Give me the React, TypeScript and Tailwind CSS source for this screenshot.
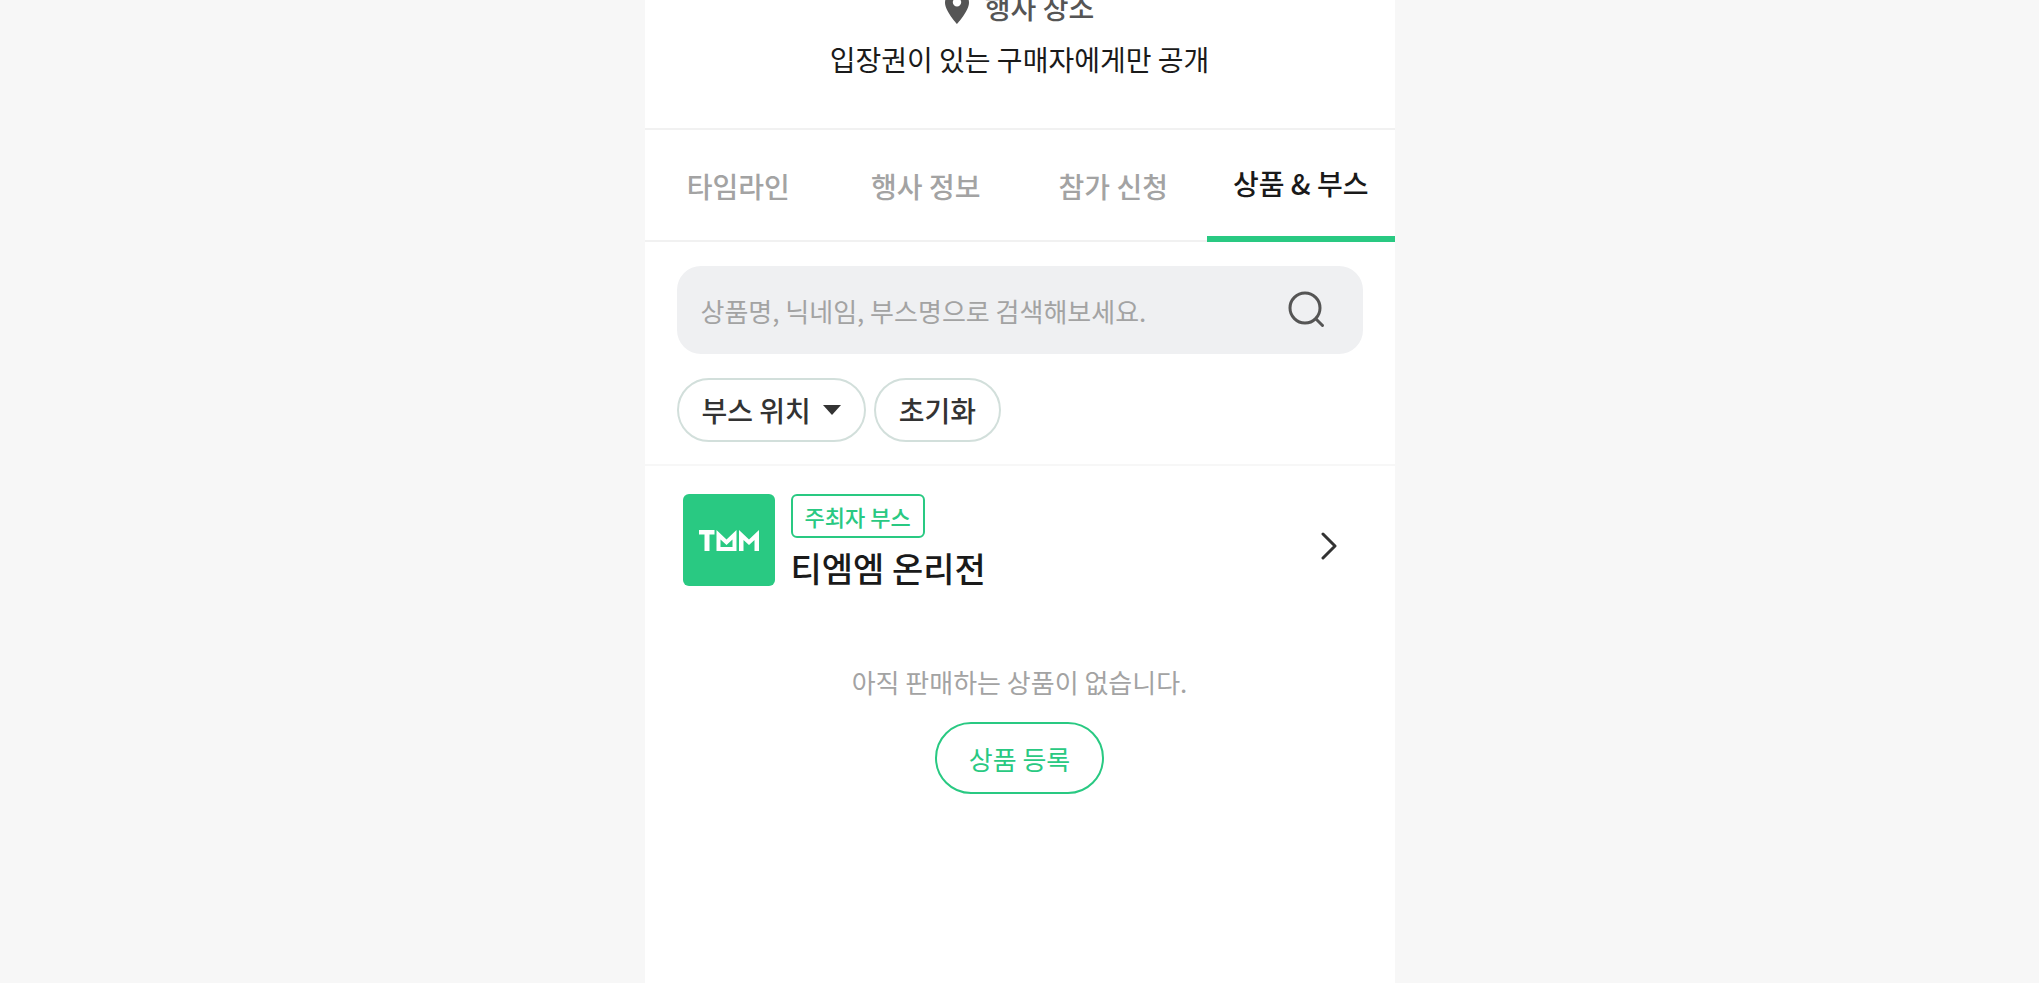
import React, { useState } from "react";

const tabs = ["타임라인", "행사 정보", "참가 신청", "상품 & 부스"];

const PinIcon: React.FC = () => (
  <svg width="24" height="34" viewBox="0 0 24 34" fill="#555555" aria-hidden="true">
    <path
      fillRule="evenodd"
      d="M12 1C5.200 1 0 6 0 12.800 0 21 12 34 12 34s12-13 12-21.200C24 6 18.800 1 12 1Zm0 15.500a4.200 4.200 0 1 1 0-8.400 4.200 4.200 0 0 1 0 8.400Z"
    />
  </svg>
);

const SearchIcon: React.FC = () => (
  <svg width="40" height="40" viewBox="0 0 40 40" fill="none" stroke="#555555" strokeWidth="3" strokeLinecap="round" aria-hidden="true">
    <circle cx="18" cy="18" r="15" />
    <path d="M29 29 35.500 35.500" />
  </svg>
);

const ChevronIcon: React.FC = () => (
  <svg width="16" height="28" viewBox="0 0 16 28" fill="none" stroke="#333333" strokeWidth="3" strokeLinecap="round" strokeLinejoin="round" aria-hidden="true">
    <path d="M2 2l12 12L2 26" />
  </svg>
);

const BoothLogo: React.FC = () => (
  <svg width="92" height="92" viewBox="0 0 92 92" role="img" aria-label="TMM" className="shrink-0">
    <rect width="92" height="92" rx="6" fill="#29c982" />
    <g fill="#ffffff">
      <path d="M16 36h15.500v4.500H26.500V57h-5V40.500H16z" />
      <path fillRule="evenodd" d="M33.500 36l10 9.500 10-9.500v21h-20zM37.500 45.500v7.500h12v-7.500L43.500 51z" />
      <path d="M56 57V36l10 9.500L76 36v21h-4.500V46L66 51l-5.500-5v11z" />
    </g>
  </svg>
);

export default function App() {
  const [active, setActive] = useState(3);

  return (
    <div className="h-screen overflow-hidden bg-[#f7f7f7] font-['Noto_Sans_CJK_KR',sans-serif] text-[#1a1a1a]">
      <main className="mx-auto flow-root min-h-screen w-full max-w-[750px] bg-white">
        {/* Event place, scrolled partly out of view */}
        <section className="-mt-[17px] flex flex-col items-center border-b-2 border-[#f1f1f1] pb-[45px]">
          <h2 className="flex items-center gap-4 text-[28px] leading-12 font-medium text-[#555555]">
            <PinIcon />
            행사 장소
          </h2>
          <p className="mt-1 text-[28px] leading-12">입장권이 있는 구매자에게만 공개</p>
        </section>

        {/* Tabs */}
        <nav className="grid h-28 grid-cols-4 shadow-[inset_0_-2px_0_#f1f1f1]">
          {tabs.map((tab, i) => (
            <button
              key={tab}
              type="button"
              onClick={() => setActive(i)}
              className={
                i === active
                  ? "border-b-6 border-[#29c982] text-[28px] font-medium"
                  : "text-[28px] font-medium text-[#a3a3a3]"
              }
            >
              {tab}
            </button>
          ))}
        </nav>

        {/* Search and filters */}
        <section className="border-b-2 border-[#f7f7f7] px-8 pt-6 pb-5.5">
          <form className="flex h-22 items-center rounded-3xl bg-[#eff0f2] pr-9 pl-6" onSubmit={(e) => e.preventDefault()}>
            <input
              type="text"
              aria-label="상품 검색"
              placeholder="상품명, 닉네임, 부스명으로 검색해보세요."
              className="min-w-0 flex-1 text-[26px] outline-none placeholder:text-[#a3a3a3]"
            />
            <button type="submit" aria-label="검색">
              <SearchIcon />
            </button>
          </form>
          <div className="mt-6 flex gap-2 text-[28px] font-medium text-[#333333]">
            <button type="button" className="flex h-16 items-center gap-3 rounded-full border-2 border-[#d2dfdb] px-[23px]">
              부스 위치
              <svg width="18" height="10" viewBox="0 0 18 10" fill="#333333" aria-hidden="true">
                <path d="M0 0h18L9 10z" />
              </svg>
            </button>
            <button type="button" className="h-16 rounded-full border-2 border-[#d2dfdb] px-[23px]">
              초기화
            </button>
          </div>
        </section>

        {/* Organizer booth */}
        <a href="#booth" className="flex items-start gap-4 px-[38px] pt-7">
          <BoothLogo />
          <div className="flex flex-1 flex-col items-start">
            <span className="rounded-md border-2 border-[#29c982] px-3 text-[22px] leading-10 font-medium text-[#29c982]">
              주최자 부스
            </span>
            <strong className="text-[34px] leading-15 font-medium">티엠엠 온리전</strong>
          </div>
          <div className="self-center pr-5">
            <ChevronIcon />
          </div>
        </a>

        {/* Products */}
        <section className="flex flex-col items-center pt-15 text-[26px]">
          <p className="leading-12 text-[#a3a3a3]">아직 판매하는 상품이 없습니다.</p>
          <button type="button" className="mt-4 h-18 rounded-full border-2 border-[#29c982] px-8 text-[#29c982]">
            상품 등록
          </button>
        </section>
      </main>
    </div>
  );
}
